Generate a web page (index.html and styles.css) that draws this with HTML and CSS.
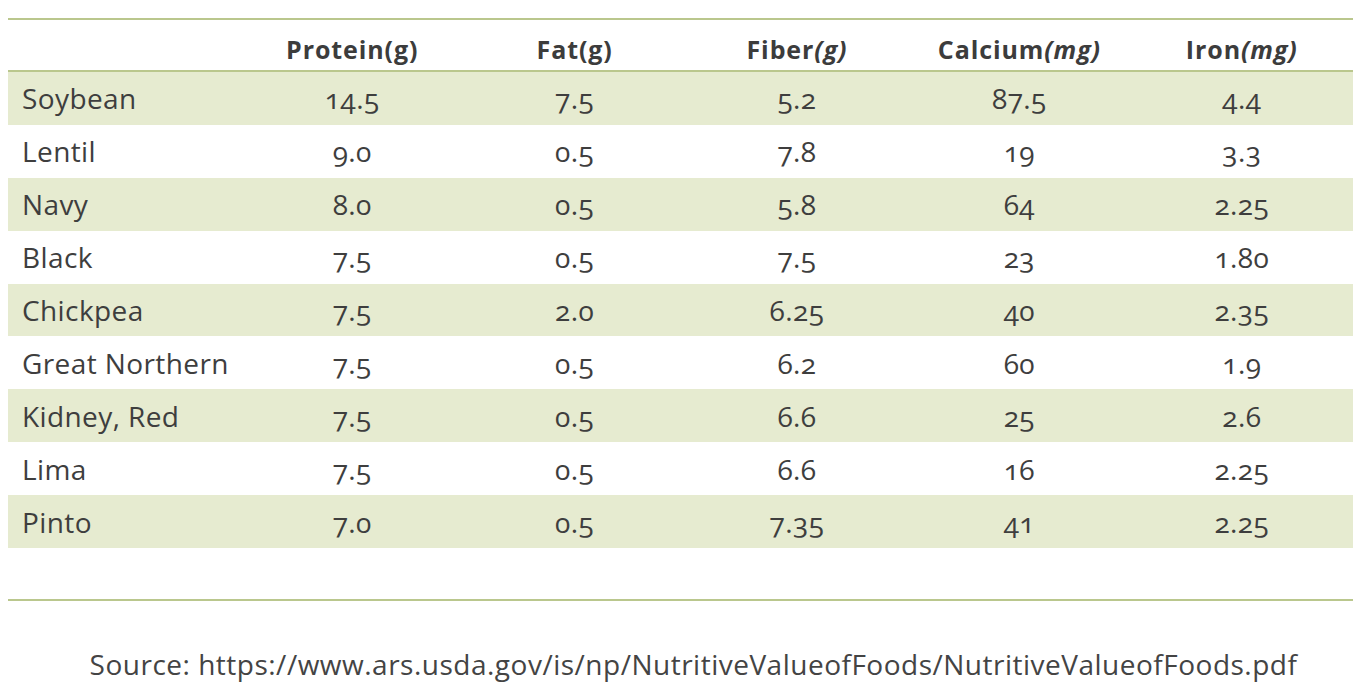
FILE: index.html
```html
<!DOCTYPE html>
<html lang="en">
<head>
<meta charset="utf-8">
<title>Beans nutrition</title>
<link rel="stylesheet" href="styles.css">
</head>
<body>
<div class="page">
  <table class="nutri">
    <colgroup>
      <col class="c-name">
      <col class="c-val"><col class="c-val"><col class="c-val"><col class="c-val"><col class="c-val">
    </colgroup>
    <thead>
      <tr>
        <th></th>
        <th>Protein(g)</th>
        <th>Fat(g)</th>
        <th>Fiber<i>(g)</i></th>
        <th>Calcium<i>(mg)</i></th>
        <th>Iron<i>(mg)</i></th>
      </tr>
    </thead>
    <tbody>
      <tr class="band"><td>Soybean</td><td>14.5</td><td>7.5</td><td>5.2</td><td>87.5</td><td>4.4</td></tr>
      <tr><td>Lentil</td><td>9.0</td><td>0.5</td><td>7.8</td><td>19</td><td>3.3</td></tr>
      <tr class="band"><td>Navy</td><td>8.0</td><td>0.5</td><td>5.8</td><td>64</td><td>2.25</td></tr>
      <tr><td>Black</td><td>7.5</td><td>0.5</td><td>7.5</td><td>23</td><td>1.80</td></tr>
      <tr class="band"><td>Chickpea</td><td>7.5</td><td>2.0</td><td>6.25</td><td>40</td><td>2.35</td></tr>
      <tr><td>Great Northern</td><td>7.5</td><td>0.5</td><td>6.2</td><td>60</td><td>1.9</td></tr>
      <tr class="band"><td>Kidney, Red</td><td>7.5</td><td>0.5</td><td>6.6</td><td>25</td><td>2.6</td></tr>
      <tr><td>Lima</td><td>7.5</td><td>0.5</td><td>6.6</td><td>16</td><td>2.25</td></tr>
      <tr class="band"><td>Pinto</td><td>7.0</td><td>0.5</td><td>7.35</td><td>41</td><td>2.25</td></tr>
      <tr class="spacer"><td colspan="6"></td></tr>
    </tbody>
  </table>
  <p class="source">Source: https://www.ars.usda.gov/is/np/NutritiveValueofFoods/NutritiveValueofFoods.pdf</p>
</div>
</body>
</html>
```
FILE: styles.css
```css
html, body {
  margin: 0;
  padding: 0;
  background: #ffffff;
}
body {
  font-family: "Open Sans", "DejaVu Sans", sans-serif;
  color: #3e3e3e;
}
.page {
  padding: 18px 12px 0 8px;
}
.nutri {
  width: 100%;
  border-collapse: collapse;
  table-layout: fixed;
  border-top: 2px solid #bac78d;
  border-bottom: 2px solid #bac78d;
}
.c-name { width: 233px; }
.nutri th {
  height: 42px;
  padding: 8px 0 0 0;
  font-size: 25px;
  letter-spacing: 0.9px;
  font-weight: 700;
  text-align: center;
  border-bottom: 2px solid #bac78d;
  color: #3c3c3c;
}
.nutri th i {
  font-style: italic;
}
.nutri td {
  height: 52.9px;
  padding: 0;
  font-size: 28px;
  letter-spacing: 0.4px;
  text-align: center;
  font-variant-numeric: oldstyle-nums;
  color: #3e3e3e;
}
.nutri td:first-child {
  text-align: left;
  padding-left: 14px;
}
.nutri tr.band td {
  background: #e6ebd0;
}
.nutri tr.spacer td {
  height: 51px;
}
.source {
  margin: 44px 0 0 0;
  line-height: 38px;
  text-align: center;
  padding-left: 26px;
  font-size: 28px;
  letter-spacing: 0.5px;
  color: #444444;
}
```
